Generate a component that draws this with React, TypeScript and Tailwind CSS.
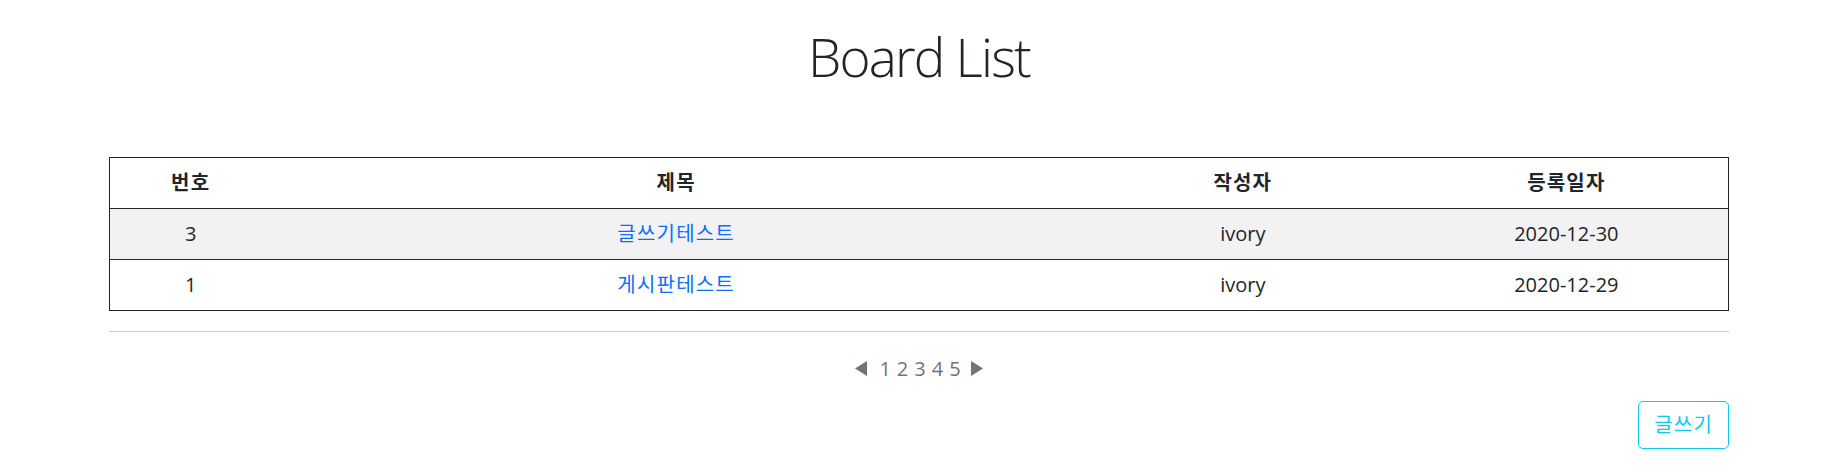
import React from "react"

type Post = {
  no: number
  title: string
  writer: string
  date: string
}

const posts: Post[] = [
  { no: 3, title: "글쓰기테스트", writer: "ivory", date: "2020-12-30" },
  { no: 1, title: "게시판테스트", writer: "ivory", date: "2020-12-29" },
]

function CaretLeft() {
  return (
    <svg width="12" height="15" viewBox="0 0 12 15" className="fill-[#6c757d]">
      <path d="M12 0 L0 7.5 L12 15 Z" />
    </svg>
  )
}

function CaretRight() {
  return (
    <svg width="12" height="15" viewBox="0 0 12 15" className="fill-[#6c757d]">
      <path d="M0 0 L12 7.5 L0 15 Z" />
    </svg>
  )
}

export default function App() {
  const cell = "h-[51px] p-0 align-middle text-center border-b border-[#212529]"
  const ko = "tracking-[1.2px]"

  return (
    <div className="min-h-screen bg-white text-[#212529] text-[20px] leading-[1.5] font-['Open_Sans','Noto_Sans_CJK_KR',sans-serif]">
      <div className="ml-[109px] w-[1620px]">
        <h1 className="pt-[25px] text-center text-[53px] font-light leading-[1.2] tracking-[-1.8px]">
          Board List
        </h1>

        <table className="mt-[68px] w-full border-collapse border border-[#212529]">
          <thead>
            <tr>
              <th className={`${cell} ${ko} w-[10%] font-bold`}>번호</th>
              <th className={`${cell} ${ko} w-[50%] font-bold`}>제목</th>
              <th className={`${cell} ${ko} w-[20%] font-bold`}>작성자</th>
              <th className={`${cell} ${ko} w-[20%] font-bold`}>등록일자</th>
            </tr>
          </thead>
          <tbody>
            {posts.map((p, i) => (
              <tr key={p.no} className={i % 2 === 0 ? "bg-[#f2f2f2]" : "bg-white"}>
                <td className={cell}>{p.no}</td>
                <td className={cell}>
                  <a href="#" className={`${ko} text-[#0d6efd] no-underline`}>
                    {p.title}
                  </a>
                </td>
                <td className={cell}>{p.writer}</td>
                <td className={cell}>{p.date}</td>
              </tr>
            ))}
          </tbody>
        </table>

        <hr className="mt-[20px] border-0 border-t border-[#c8c9ca]" />

        <div className="mt-[22px] flex items-center justify-center text-[#6c757d]">
          <a href="#" className="mr-[12px] flex items-center">
            <CaretLeft />
          </a>
          <div className="flex gap-[6px]">
            {[1, 2, 3, 4, 5].map((n) => (
              <a key={n} href="#" className="text-[#6c757d]">
                {n}
              </a>
            ))}
          </div>
          <a href="#" className="ml-[10px] flex items-center">
            <CaretRight />
          </a>
        </div>

        <div className="mt-[17px] flex justify-end">
          <button className={`${ko} h-[48px] rounded-[5px] border border-[#0dcaf0] px-[15px] text-[20px] text-[#0dcaf0]`}>
            글쓰기
          </button>
        </div>
      </div>
    </div>
  )
}
